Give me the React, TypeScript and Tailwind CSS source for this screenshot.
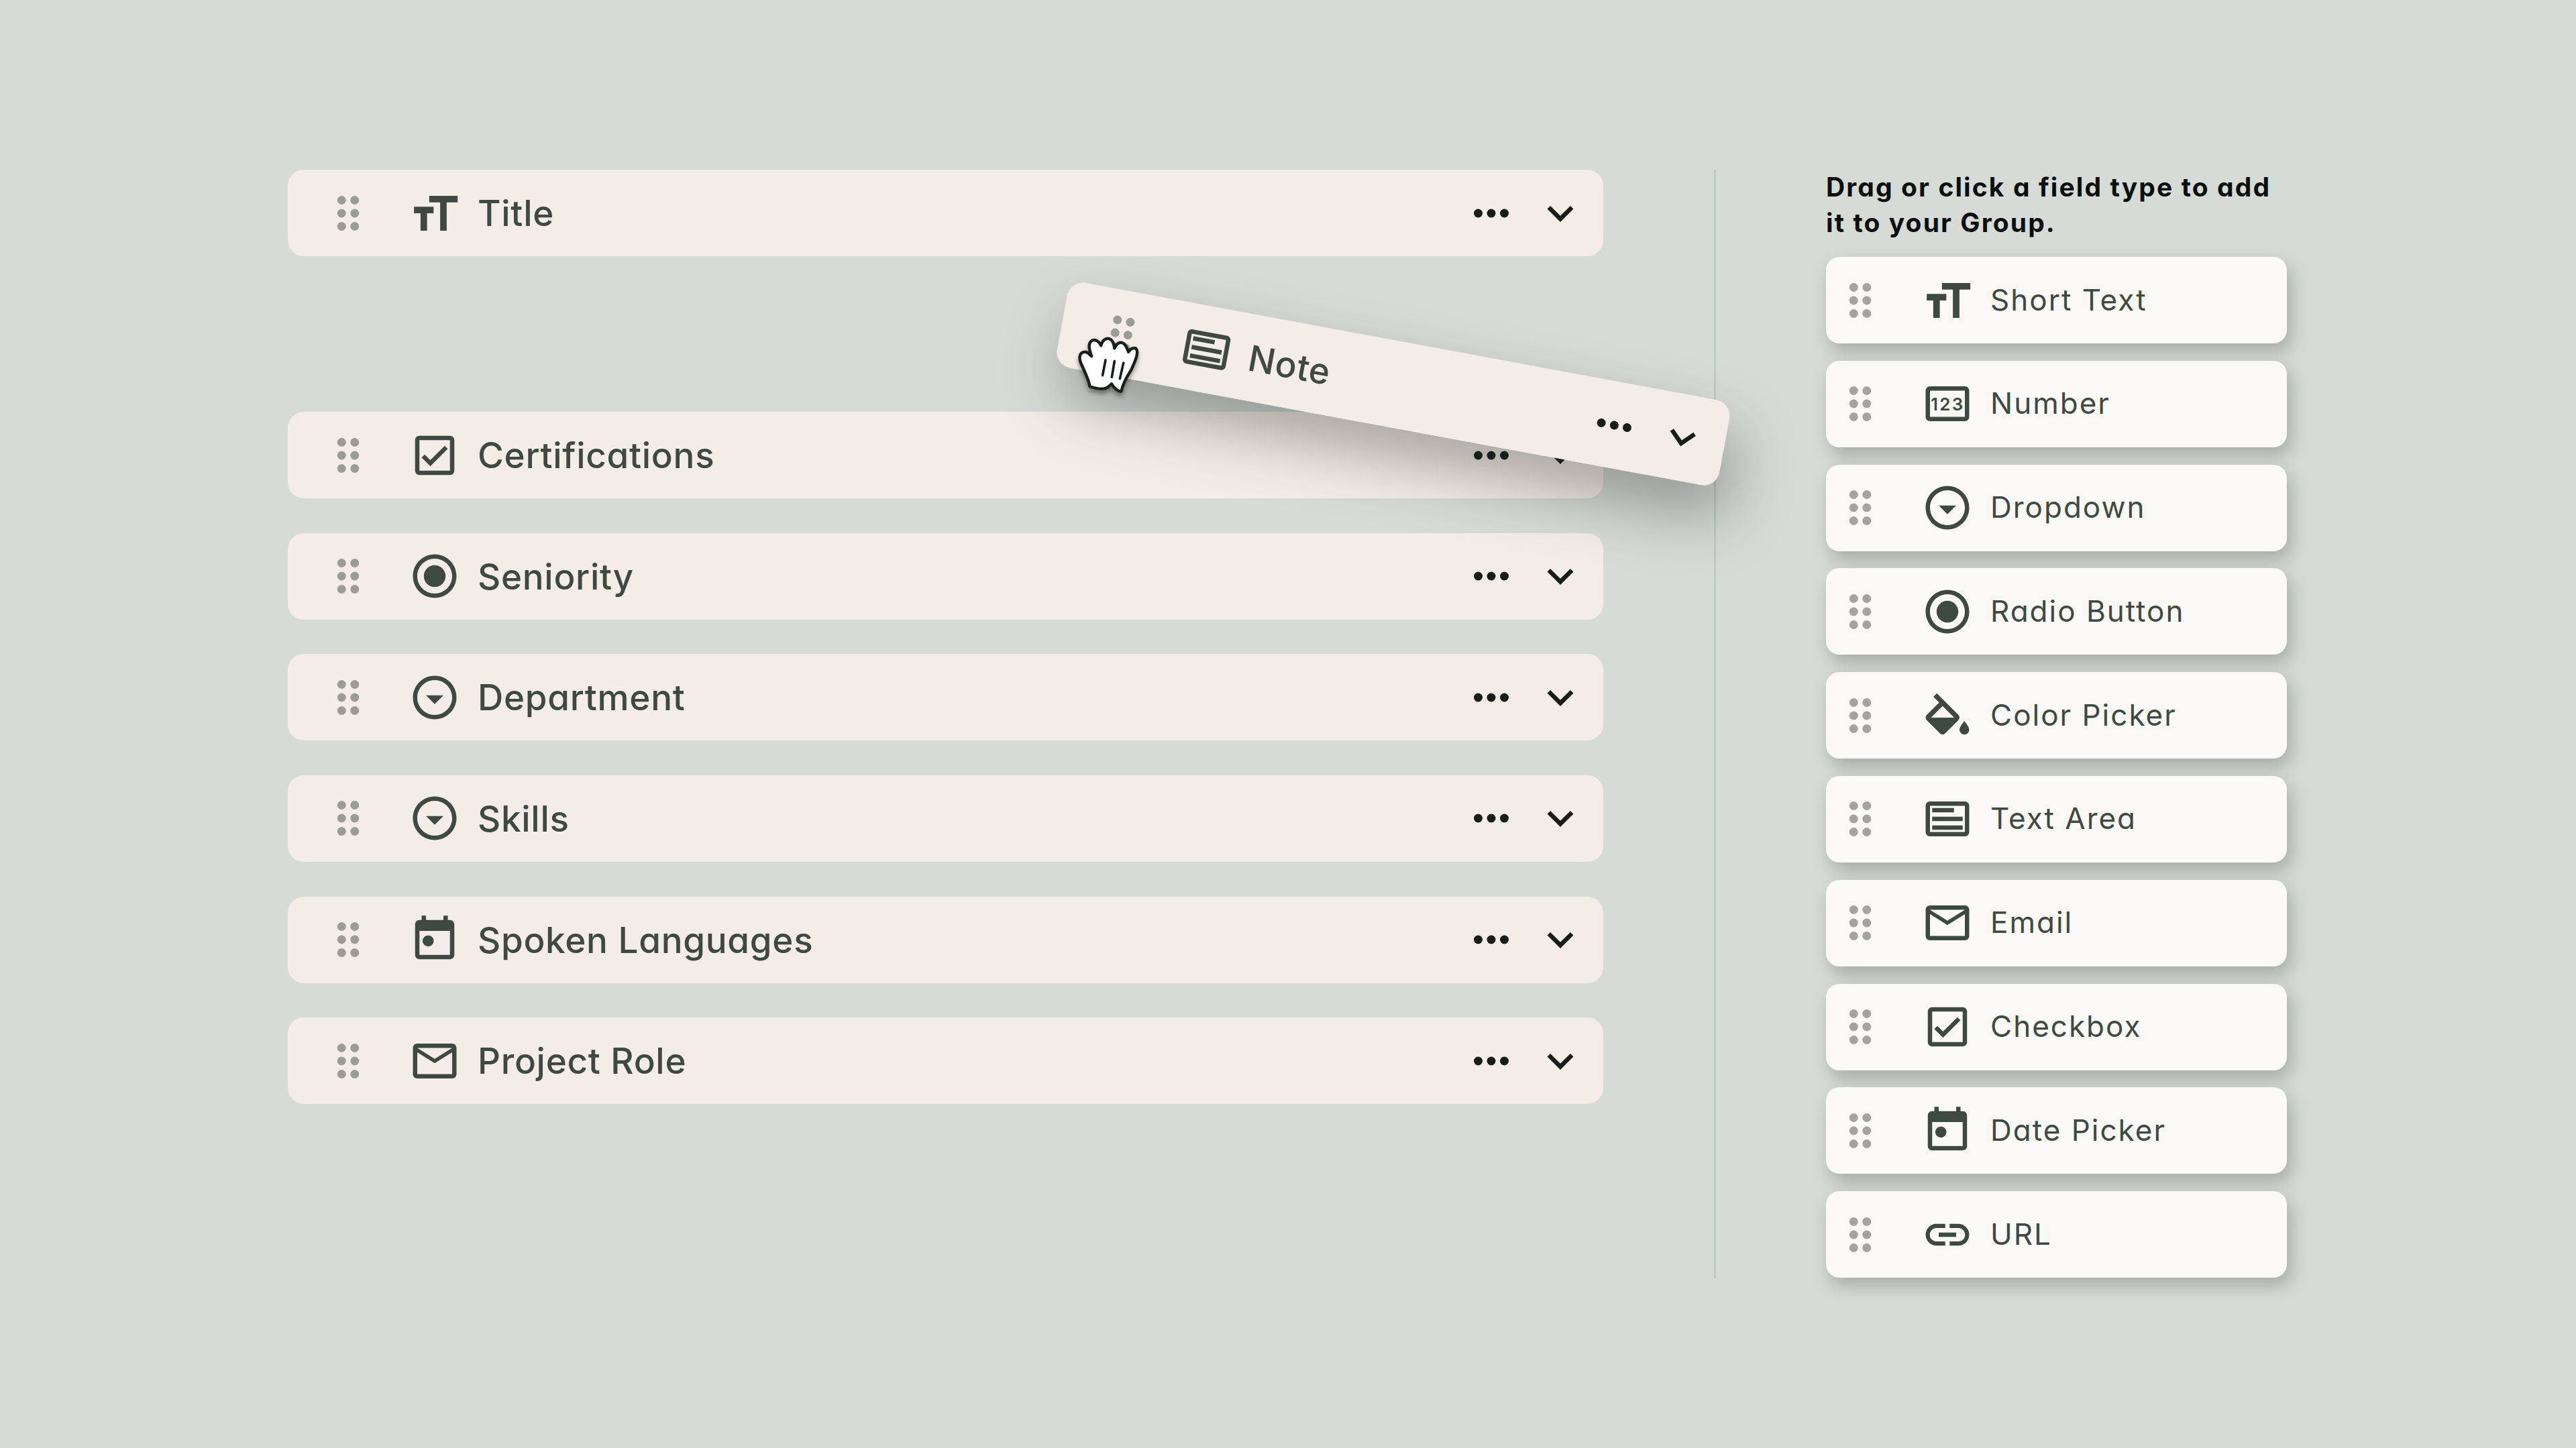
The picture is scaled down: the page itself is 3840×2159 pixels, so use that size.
import React from "react";

type IconProps = { kind: string };

function FieldIcon({ kind }: IconProps) {
  const p: Record<string, React.ReactNode> = {
    title: <path d="M9.5 4v3h5v13h3V7h5V4h-13zM2.5 9v3h3v8h3v-8h3V9h-9z" />,
    number: (
      <>
        <path d="M20 4H4c-1.1 0-2 .9-2 2v12c0 1.1.9 2 2 2h16c1.1 0 2-.9 2-2V6c0-1.1-.9-2-2-2zm0 14H4V6h16v12z" />
        <text x="12.1" y="15" textAnchor="middle" fontSize="8" fontWeight="600" letterSpacing="0.7" fontFamily="Inter, sans-serif">123</text>
      </>
    ),
    dropdown: <path d="M12 4c4.41 0 8 3.59 8 8s-3.59 8-8 8-8-3.59-8-8 3.59-8 8-8m0-2C6.48 2 2 6.48 2 12s4.48 10 10 10 10-4.48 10-10S17.52 2 12 2zm0 13l-4-4h8z" />,
    radio: <path fillRule="evenodd" d="M12 2C6.48 2 2 6.48 2 12s4.48 10 10 10 10-4.48 10-10S17.52 2 12 2zm0 18c-4.42 0-8-3.58-8-8s3.58-8 8-8 8 3.58 8 8-3.58 8-8 8zm0-13c-2.76 0-5 2.24-5 5s2.24 5 5 5 5-2.24 5-5-2.24-5-5-5z" />,
    fill: <path transform="translate(-1.33 1.8) scale(1.11)" d="M16.56 8.94L7.62 0 6.21 1.41l2.38 2.38-5.15 5.15c-.59.59-.59 1.54 0 2.12l5.5 5.5c.29.29.68.44 1.06.44s.77-.15 1.06-.44l5.5-5.5c.59-.58.59-1.53 0-2.12zM5.21 10L10 5.21 14.79 10H5.21zM19 11.5s-2 2.17-2 3.5c0 1.1.9 2 2 2s2-.9 2-2c0-1.33-2-3.5-2-3.5z" />,
    text: <path d="M20 4H4c-1.1 0-2 .9-2 2v12c0 1.1.9 2 2 2h16c1.1 0 2-.9 2-2V6c0-1.1-.9-2-2-2zm0 14H4V6h16v12zM5 7h10v2H5zM5 11h14v2H5zM5 15h14v2H5z" />,
    mail: <path d="M20 4H4c-1.1 0-1.99.9-1.99 2L2 18c0 1.1.9 2 2 2h16c1.1 0 2-.9 2-2V6c0-1.1-.9-2-2-2zm0 14H4V8l8 5 8-5v10zm-8-7L4 6h16l-8 5z" />,
    check: <path d="M19 3H5c-1.11 0-2 .9-2 2v14c0 1.1.89 2 2 2h14c1.11 0 2-.9 2-2V5c0-1.1-.89-2-2-2zm0 16H5V5h14v14zM17.99 9l-1.41-1.42-6.59 6.59-2.58-2.57-1.42 1.41 4 3.99z" />,
    date: (
      <>
        <path d="M19 3h-1V1h-2v2H8V1H6v2H5c-1.11 0-1.99.9-1.99 2L3 19c0 1.1.89 2 2 2h14c1.1 0 2-.9 2-2V5c0-1.1-.9-2-2-2zm0 16H5V8h14v11z" />
        <circle cx="9" cy="12.6" r="2.55" />
      </>
    ),
    link: <path d="M3.9 12c0-1.71 1.39-3.1 3.1-3.1h4V7H7c-2.76 0-5 2.24-5 5s2.24 5 5 5h4v-1.9H7c-1.71 0-3.1-1.39-3.1-3.1zM8 13h8v-2H8v2zm9-6h-4v1.9h4c1.71 0 3.1 1.39 3.1 3.1s-1.39 3.1-3.1 3.1h-4V17h4c2.76 0 5-2.24 5-5s-2.24-5-5-5z" />,
  };
  return (
    <svg viewBox="0 0 24 24" className="w-[78px] h-[78px] shrink-0 fill-[#3e4a41]">
      {p[kind]}
    </svg>
  );
}

function Grip({ tone }: { tone: string }) {
  return (
    <svg viewBox="0 0 24 24" className={`w-[78px] h-[78px] shrink-0 ${tone}`}>
      {[6, 12, 18].map((y) => (
        <React.Fragment key={y}>
          <circle cx="9" cy={y} r="2" />
          <circle cx="15" cy={y} r="2" />
        </React.Fragment>
      ))}
    </svg>
  );
}

function GroupRow({ icon, label }: { icon: string; label: string }) {
  return (
    <div className="flex items-center h-[129px] rounded-[24px] bg-[#f4ede7] pl-[51px] pr-[25px]">
      <Grip tone="fill-[#9d9c94]" />
      <div className="ml-[51px]">
        <FieldIcon kind={icon} />
      </div>
      <span className="ml-[25px] mt-[2px] text-[53px] font-medium tracking-[0.7px] text-[#3e4a41] leading-none">{label}</span>
      <svg viewBox="0 0 24 24" className="ml-auto w-[78px] h-[78px] fill-[#181d18]">
        <circle cx="6" cy="12" r="2" />
        <circle cx="12" cy="12" r="2" />
        <circle cx="18" cy="12" r="2" />
      </svg>
      <svg viewBox="0 0 24 24" className="ml-[25px] w-[78px] h-[78px] fill-[#181d18]">
        <path d="M16.59 8.59 12 13.17 7.41 8.59 6 10l6 6 6-6z" />
      </svg>
    </div>
  );
}

function TypeCard({ icon, label }: { icon: string; label: string }) {
  return (
    <div className="flex items-center h-[129px] rounded-[20px] bg-[#faf9f7] pl-[12px] shadow-[6px_12px_26px_rgba(70,85,75,0.35)]">
      <Grip tone="fill-[#a3a3a0]" />
      <div className="ml-[52px]">
        <FieldIcon kind={icon} />
      </div>
      <span className="ml-[25px] -mt-[2px] text-[44px] tracking-[2px] text-[#3e4a41] leading-none">{label}</span>
    </div>
  );
}

const rows = [
  { icon: "check", label: "Certifications" },
  { icon: "radio", label: "Seniority" },
  { icon: "dropdown", label: "Department" },
  { icon: "dropdown", label: "Skills" },
  { icon: "date", label: "Spoken Languages" },
  { icon: "mail", label: "Project Role" },
];

const types = [
  { icon: "title", label: "Short Text" },
  { icon: "number", label: "Number" },
  { icon: "dropdown", label: "Dropdown" },
  { icon: "radio", label: "Radio Button" },
  { icon: "fill", label: "Color Picker" },
  { icon: "text", label: "Text Area" },
  { icon: "mail", label: "Email" },
  { icon: "check", label: "Checkbox" },
  { icon: "date", label: "Date Picker" },
  { icon: "link", label: "URL" },
];

export default function App() {
  return (
    <div className="relative w-[3840px] h-[2159px] overflow-hidden bg-[#d6dbd5] font-[Inter,sans-serif] [font-feature-settings:'cv11']">
      <div className="flex pl-[429px] pt-[253px]">
        <div className="w-[1961px] flex flex-col gap-[51.6px]">
          <GroupRow icon="title" label="Title" />
          <div className="h-[129px]" />
          {rows.map((r) => (
            <GroupRow key={r.label} icon={r.icon} label={r.label} />
          ))}
        </div>
        <div className="ml-[165px] w-[3px] h-[1653px] bg-[#bccbc3]" />
        <div className="ml-[164px] w-[687px]">
          <p className="h-[130px] -translate-y-[1px] text-[39px] leading-[53px] font-bold tracking-[2.1px] text-[#0b0f0c] whitespace-nowrap">
            Drag or click a field type to add
            <br />
            it to your Group.
          </p>
          <div className="flex flex-col gap-[25.8px]">
            {types.map((t) => (
              <TypeCard key={t.label} icon={t.icon} label={t.label} />
            ))}
          </div>
        </div>
      </div>

      <div className="absolute left-[1575px] top-[508px] w-[1004px] rotate-[10.5deg] rounded-[24px] shadow-[18px_45px_90px_rgba(30,40,35,0.36)]">
        <GroupRow icon="text" label="Note" />
      </div>

      <svg
        viewBox="140 185 280 260"
        className="absolute left-[1606px] top-[501px] w-[94px] h-[87px] drop-shadow-[0_5px_3px_rgba(30,30,30,0.45)]"
      >
        <path
          fill="#ffffff"
          stroke="#1a1e1c"
          strokeWidth="13"
          strokeLinejoin="round"
          d="M195 410C190 375 165 330 155 305C145 280 150 258 172 256C185 255 195 268 203 275C195 250 185 225 200 208C215 197 235 205 245 228C250 205 265 193 280 197C298 200 303 225 305 240C312 220 330 208 345 218C358 226 362 245 367 256C378 238 400 232 405 248C410 270 395 300 380 335C365 360 345 385 335 432C320 430 305 420 292 398C280 410 270 420 255 420C235 422 210 415 195 410Z"
        />
        <path
          fill="none"
          stroke="#1a1e1c"
          strokeWidth="11"
          strokeLinecap="round"
          d="M265 292L252 360M305 297L293 368M345 305L329 375"
        />
      </svg>
    </div>
  );
}
